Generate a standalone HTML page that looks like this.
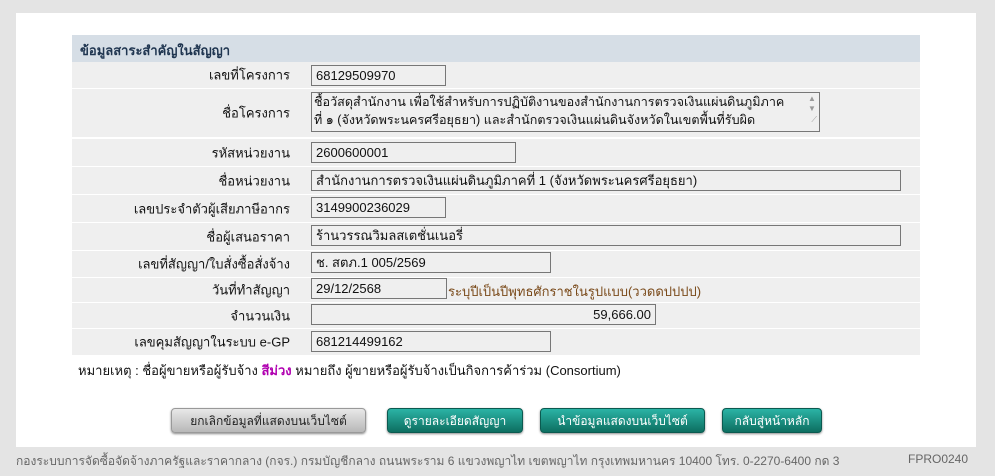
<!DOCTYPE html>
<html><head><meta charset="utf-8"><style>
*{box-sizing:border-box;margin:0;padding:0}
body{width:995px;height:476px;background:#e4e4e4;font-family:"Liberation Sans","DejaVu Sans",sans-serif;font-size:13px;color:#111;position:relative;overflow:hidden}
.panel{position:absolute;left:16px;top:13px;width:960px;height:434px;background:#fff}
.hdr{position:absolute;left:72px;top:35px;width:848px;height:27px;background:#d6dee6;font-weight:bold;color:#1f3550;padding:5px 0 0 8px;font-size:13px}
.row{position:absolute;left:72px;width:848px;background:#efefef}
.lab{position:absolute;left:0;width:218px;text-align:right;top:50%;transform:translateY(-50%)}
.inp{position:absolute;border:1px solid #777;background:#efefef;padding:1px 4px;height:21px;line-height:18px;white-space:nowrap;overflow:hidden}
.btn{position:absolute;top:408px;height:25px;border-radius:4px;font-size:12px;text-align:center;line-height:25px;color:#fff;box-shadow:0 1px 2px #888}
.g{background:linear-gradient(#e8e8e8,#b8b8b8);color:#222;border:1px solid #999}
.t{background:linear-gradient(#2bb3a5,#0d6e60);border:1px solid #0b5a50}
</style></head><body>
<div class="panel"></div>
<div class="hdr">ข้อมูลสาระสำคัญในสัญญา</div>

<div class="row" style="top:62px;height:26px"><span class="lab">เลขที่โครงการ</span></div>
<div class="inp" style="left:311px;top:65px;width:135px">68129509970</div>

<div class="row" style="top:89px;height:48px"><span class="lab">ชื่อโครงการ</span></div>
<div class="inp" style="left:311px;top:92px;width:509px;height:40px;padding:0 2px"><div style="white-space:normal;width:478px;font-size:12.6px;line-height:18px">ชื้อวัสดุสำนักงาน เพื่อใช้สำหรับการปฏิบัติงานของสำนักงานการตรวจเงินแผ่นดินภูมิภาค ที่ ๑ (จังหวัดพระนครศรีอยุธยา) และสำนักตรวจเงินแผ่นดินจังหวัดในเขตพื้นที่รับผิด</div>
<div style="position:absolute;right:1px;top:1px;width:12px;height:22px;color:#999;font-size:8px;line-height:10px;text-align:center">▲<br>▼</div>
<div style="position:absolute;right:2px;bottom:2px;font-size:8px;color:#999">⟋</div></div>

<div class="row" style="top:139px;height:27px"><span class="lab">รหัสหน่วยงาน</span></div>
<div class="inp" style="left:311px;top:142px;width:205px">2600600001</div>

<div class="row" style="top:167px;height:27px"><span class="lab">ชื่อหน่วยงาน</span></div>
<div class="inp" style="left:311px;top:170px;width:590px">สำนักงานการตรวจเงินแผ่นดินภูมิภาคที่ 1 (จังหวัดพระนครศรีอยุธยา)</div>

<div class="row" style="top:195px;height:27px"><span class="lab">เลขประจำตัวผู้เสียภาษีอากร</span></div>
<div class="inp" style="left:311px;top:197px;width:135px">3149900236029</div>

<div class="row" style="top:223px;height:27px"><span class="lab">ชื่อผู้เสนอราคา</span></div>
<div class="inp" style="left:311px;top:225px;width:590px">ร้านวรรณวิมลสเตชั่นเนอรี่</div>

<div class="row" style="top:251px;height:26px"><span class="lab">เลขที่สัญญา/ใบสั่งซื้อสั่งจ้าง</span></div>
<div class="inp" style="left:311px;top:252px;width:240px">ช. สตภ.1 005/2569</div>

<div class="row" style="top:278px;height:24px"><span class="lab">วันที่ทำสัญญา</span></div>
<div class="inp" style="left:311px;top:278px;width:136px">29/12/2568</div>
<div style="position:absolute;left:448px;top:281px;color:#7a4a1a">ระบุปีเป็นปีพุทธศักราชในรูปแบบ(ววดดปปปป)</div>

<div class="row" style="top:303px;height:25px"><span class="lab">จำนวนเงิน</span></div>
<div class="inp" style="left:311px;top:304px;width:345px;text-align:right">59,666.00</div>

<div class="row" style="top:329px;height:26px"><span class="lab">เลขคุมสัญญาในระบบ e-GP</span></div>
<div class="inp" style="left:311px;top:331px;width:240px">681214499162</div>

<div style="position:absolute;left:78px;top:360px">หมายเหตุ : ชื่อผู้ขายหรือผู้รับจ้าง <b style="color:#b000b0">สีม่วง</b> หมายถึง ผู้ขายหรือผู้รับจ้างเป็นกิจการค้าร่วม (Consortium)</div>

<div class="btn g" style="left:171px;width:195px">ยกเลิกข้อมูลที่แสดงบนเว็บไซต์</div>
<div class="btn t" style="left:387px;width:136px">ดูรายละเอียดสัญญา</div>
<div class="btn t" style="left:540px;width:165px">นำข้อมูลแสดงบนเว็บไซต์</div>
<div class="btn t" style="left:722px;width:100px">กลับสู่หน้าหลัก</div>

<div style="position:absolute;left:16px;top:452px;font-size:12px;color:#666">กองระบบการจัดซื้อจัดจ้างภาครัฐและราคากลาง (กจร.) กรมบัญชีกลาง ถนนพระราม 6 แขวงพญาไท เขตพญาไท กรุงเทพมหานคร 10400 โทร. 0-2270-6400 กด 3</div>
<div style="position:absolute;left:908px;top:452px;font-size:12px;color:#666">FPRO0240</div>
</body></html>
